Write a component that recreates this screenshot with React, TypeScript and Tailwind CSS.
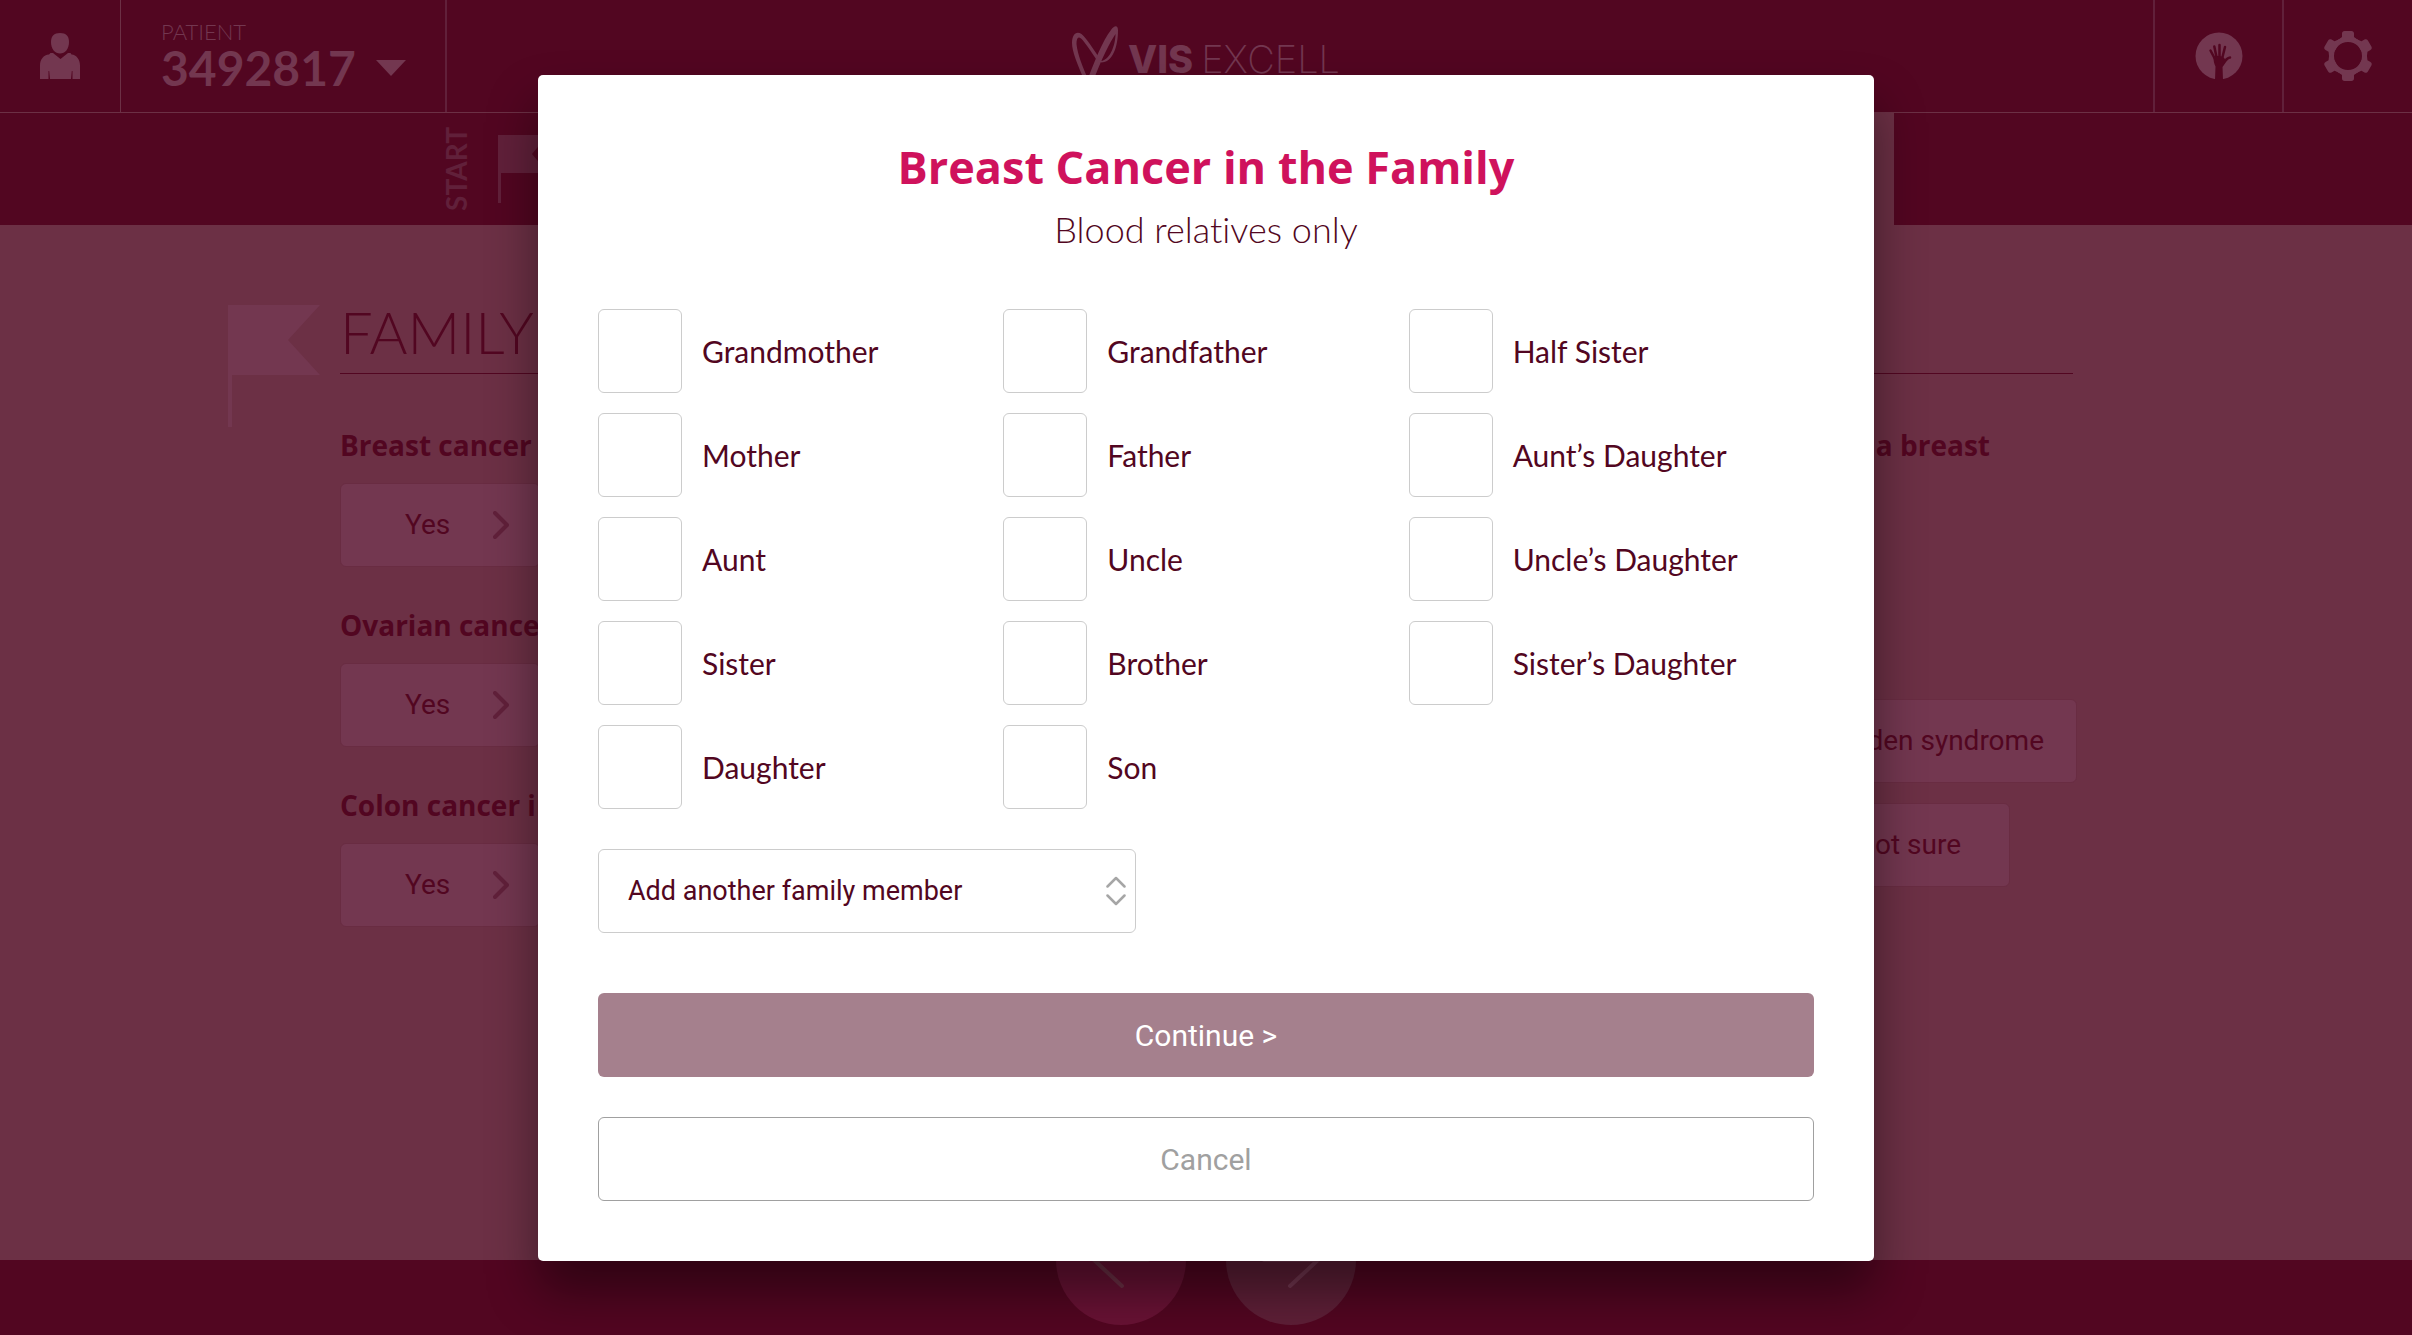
import { useState } from 'react';
import type { ReactNode } from 'react';

const relatives = [
  'Grandmother', 'Grandfather', 'Half Sister',
  'Mother', 'Father', 'Aunt’s Daughter',
  'Aunt', 'Uncle', 'Uncle’s Daughter',
  'Sister', 'Brother', 'Sister’s Daughter',
  'Daughter', 'Son'
];

const questions = [
  'Breast cancer',
  'Ovarian cancer',
  'Colon cancer in family'
];

function PersonIcon() {
  return (
    <svg width="40" height="46" viewBox="0 0 40 46" fill="currentColor" aria-hidden="true">
      <path d="M20 0c6 0 9 3 9 9 0 7-4 11.500-9 11.500S11 16 11 9c0-6 3-9 9-9Z" />
      <path d="M10.500 20h2.500l7.500 6 7.500-6h2.500l1 1.500c5 .5 8.500 5 8.500 11V46h-7.500v-8l-.7 0-.8 8H10l-.8-8-.7 0v8H0V32.500c0-6 3.500-10.500 9-11Z" />
    </svg>
  );
}

function LogoMark() {
  return (
    <svg width="46" height="60" viewBox="0 0 46 60" fill="currentColor" aria-hidden="true">
      <path d="M14 58C5 38 0 25 0 17 0 8 4.500 4.500 9.500 8 15 13 21 22.500 27 31.500L25 34.500C19 25.500 13 16 9 12.500 6 10 4.500 12 4.500 18c1 10 6 23 12.500 37Z" />
      <path d="M14 58C22 36 31 14 39 4 42.500-1 46-1 46 4.500 46 20 41 36.500 29 36.500V35C38 34 43.500 19 43.500 8 38 16 30 32 20 58Z" />
    </svg>
  );
}

function HandIcon() {
  return (
    <svg width="48" height="48" viewBox="0 0 48 48" aria-hidden="true">
      <circle cx="24" cy="24" r="23.500" fill="currentColor" />
      <g className="stroke-[#520621]" strokeLinecap="round" fill="none">
        <path d="M15.500 18.500l5 9.500M19.300 14.500l2.500 12M24.500 13v13M30 15l-3 12M35 25.500c-3 0-5 4-8 8" strokeWidth="2.500" />
      </g>
      <path className="fill-[#520621]" d="M18.500 25c4-1.500 6-1.500 9.500 0l2 2 3-2-5.500 9.500L28 48h-8l.5-13.500c-1.500-3-2-6-2-9.500Z" />
    </svg>
  );
}

function GearIcon() {
  return (
    <svg width="50" height="50" viewBox="0 0 50 50" fill="currentColor" aria-hidden="true">
      <circle cx="25" cy="25" r="16.500" fill="none" stroke="currentColor" strokeWidth="5" />
      {[0, 60, 120, 180, 240, 300].map((angle) => (
        <path
          key={angle}
          transform={`rotate(${angle} 25 25)`}
          d="M21.500 0h7c1.500 0 2.500 1 2.500 2.500V6l4 3-2.500 2h-15L15 9l4-3V2.500C19 1 20 0 21.500 0Z"
        />
      ))}
    </svg>
  );
}

function ArrowIcon({ className = '' }: { className?: string }) {
  return (
    <svg
      width="60"
      height="60"
      viewBox="0 0 60 60"
      fill="none"
      stroke="currentColor"
      strokeWidth="4"
      strokeLinecap="round"
      className={className}
      aria-hidden="true"
    >
      <path d="M3 30h54M31 4L3 30l28 26" />
    </svg>
  );
}

function AnswerButton({ children, className = '' }: { children: ReactNode; className?: string }) {
  return (
    <button
      className={`flex h-[84px] items-center rounded-md border border-[#692c42] bg-[#733750] font-[Roboto] text-[28px] ${className}`}
    >
      {children}
    </button>
  );
}

function Header() {
  return (
    <header className="flex h-[113px] border-b border-[#6c3045] text-[#733750]">
      <div className="flex flex-1">
        <button aria-label="Profile" className="flex w-[121px] items-center justify-center border-r border-[#6c3045]">
          <PersonIcon />
        </button>
        <button className="flex w-[326px] flex-col justify-center border-r-2 border-[#61203a] pl-10 text-left font-[Lato]">
          <span className="text-[22px] leading-6 font-light">PATIENT</span>
          <span className="flex items-center gap-5 text-[48px] leading-[48px] font-bold">
            3492817
            <svg width="30" height="16" viewBox="0 0 30 16" fill="currentColor" aria-hidden="true">
              <path d="M0 0h30L15 16Z" />
            </svg>
          </span>
        </button>
      </div>
      <div className="flex items-start gap-[10px] pt-[26px]">
        <LogoMark />
        <span className="flex gap-2 pt-3 text-[38px] leading-[42px]">
          <span className="font-extrabold">VIS</span>
          <span className="font-extralight">EXCELL</span>
        </span>
      </div>
      <div className="flex flex-1 justify-end">
        <button aria-label="Help" className="flex w-[129px] items-center justify-center border-l-2 border-[#61203a]">
          <HandIcon />
        </button>
        <button aria-label="Settings" className="flex w-[130px] items-center justify-center border-l-2 border-[#61203a]">
          <GearIcon />
        </button>
      </div>
    </header>
  );
}

function Progress() {
  return (
    <nav className="flex h-28 justify-between pr-[518px] pl-[440px] text-[#61203a]">
      <div className="flex items-center gap-[26px]">
        <span className="rotate-180 font-[Lato] text-[28px] leading-8 font-bold [writing-mode:vertical-rl]">START</span>
        <svg width="50" height="68" viewBox="0 0 50 68" fill="currentColor" aria-hidden="true">
          <path d="M0 0h50L34 19l16 19H3v30H0Z" />
        </svg>
      </div>
      <div className="w-[120px] bg-[#6c3045]"></div>
    </nav>
  );
}

function Questions() {
  return (
    <main className="flex-1 bg-[#6c3045] pt-20 pr-[335px] pl-[228px]">
      <div className="flex gap-5">
        <svg width="92" height="122" viewBox="0 0 92 122" className="text-[#733750]" fill="currentColor" aria-hidden="true">
          <path d="M0 0h92L60 35l32 35H4v52H0Z" />
        </svg>
        <h1 className="mr-1 h-[69px] flex-1 border-b border-[#520621] font-[Lato] text-[58px] leading-[54px] font-light">
          FAMILY
        </h1>
      </div>
      <div className="flex justify-between pl-28">
        <div className="flex flex-col gap-10">
          {questions.map((question) => (
            <section key={question}>
              <h2 className="mb-5 font-[Open_Sans] text-[28px] leading-9 font-bold">{question}</h2>
              <AnswerButton className="w-[200px] justify-between pr-[30px] pl-16">
                Yes
                <svg
                  width="16"
                  height="28"
                  viewBox="0 0 16 28"
                  fill="none"
                  strokeWidth="4"
                  strokeLinecap="round"
                  strokeLinejoin="round"
                  className="stroke-[#61203a]"
                  aria-hidden="true"
                >
                  <path d="M2 2l12 12L2 26" />
                </svg>
              </AnswerButton>
            </section>
          ))}
        </div>
        <div className="flex flex-col items-end">
          <h2 className="mr-[87px] font-[Open_Sans] text-[28px] leading-9 font-bold">Had a breast</h2>
          <div className="flex flex-col items-end gap-5 pt-[236px]">
            <AnswerButton className="px-8">Cowden syndrome</AnswerButton>
            <AnswerButton className="mr-[67px] px-12">Not sure</AnswerButton>
          </div>
        </div>
      </div>
    </main>
  );
}

function Footer() {
  return (
    <footer className="relative h-[75px]">
      <div className="absolute inset-x-0 -top-[65px] flex justify-center gap-10">
        <button
          aria-label="Previous"
          className="flex size-[130px] items-center justify-center rounded-full bg-[#681234] text-[#6c3045]"
        >
          <ArrowIcon />
        </button>
        <button
          aria-label="Next"
          className="flex size-[130px] items-center justify-center rounded-full bg-[#5e1f37] text-[#733750]"
        >
          <ArrowIcon className="rotate-180" />
        </button>
      </div>
    </footer>
  );
}

function FamilyDialog() {
  const [selected, setSelected] = useState<string[]>([]);

  const toggle = (name: string) => {
    setSelected(selected.includes(name) ? selected.filter((item) => item !== name) : [...selected, name]);
  };

  return (
    <div className="absolute inset-0 flex items-start justify-center pt-[75px]">
      <div
        role="dialog"
        aria-modal="true"
        aria-labelledby="dialog-title"
        className="w-full max-w-[1336px] rounded-[5px] bg-white px-[60px] pt-[60px] pb-[60px] shadow-[0_30px_50px_rgba(0,0,0,0.43)]"
      >
        <div className="mb-[50px] text-center">
          <h2 id="dialog-title" className="font-[Open_Sans] text-[45px] leading-[64px] font-bold text-[#cf125c]">
            Breast Cancer in the Family
          </h2>
          <p className="font-[Lato] text-[36px] leading-[60px] font-light [font-variant-ligatures:none]">
            Blood relatives only
          </p>
        </div>

        <div className="grid grid-cols-3 gap-y-5">
          {relatives.map((name) => (
            <label key={name} className="flex items-center gap-5 font-[Lato] text-[30px] leading-9">
              <input
                type="checkbox"
                checked={selected.includes(name)}
                onChange={() => toggle(name)}
                className="size-[84px] appearance-none rounded-md border border-[#cccccc] bg-white checked:bg-[#cf125c]"
              />
              {name}
            </label>
          ))}
        </div>

        <div className="relative mt-10 w-[538px]">
          <select
            aria-label="Add another family member"
            className="h-[84px] w-full appearance-none rounded-md border border-[#cccccc] bg-white pr-14 pl-[29px] font-[Roboto] text-[27px]"
          >
            <option>Add another family member</option>
            <option>Niece</option>
            <option>Nephew</option>
          </select>
          <svg
            width="20"
            height="30"
            viewBox="0 0 20 30"
            fill="none"
            strokeWidth="2.500"
            strokeLinecap="round"
            strokeLinejoin="round"
            className="pointer-events-none absolute top-[27px] right-[10px] stroke-[#a6a6a6]"
            aria-hidden="true"
          >
            <path d="M1.500 10.500L10 2l8.500 8.500M1.500 19.500L10 28l8.500-8.500" />
          </svg>
        </div>

        <button className="mt-[60px] h-[84px] w-full rounded-md bg-[#a5808d] font-[Roboto] text-[30px] text-white">
          Continue &gt;
        </button>
        <button className="mt-10 h-[84px] w-full rounded-md border border-[#a0a0a0] font-[Roboto] text-[30px] text-[#a0a0a0]">
          Cancel
        </button>
      </div>
    </div>
  );
}

export default function App() {
  return (
    <div className="relative flex min-h-screen flex-col overflow-hidden bg-[#520621] font-[Inter,sans-serif] text-[#520621]">
      <Header />
      <Progress />
      <Questions />
      <Footer />
      <FamilyDialog />
    </div>
  );
}
